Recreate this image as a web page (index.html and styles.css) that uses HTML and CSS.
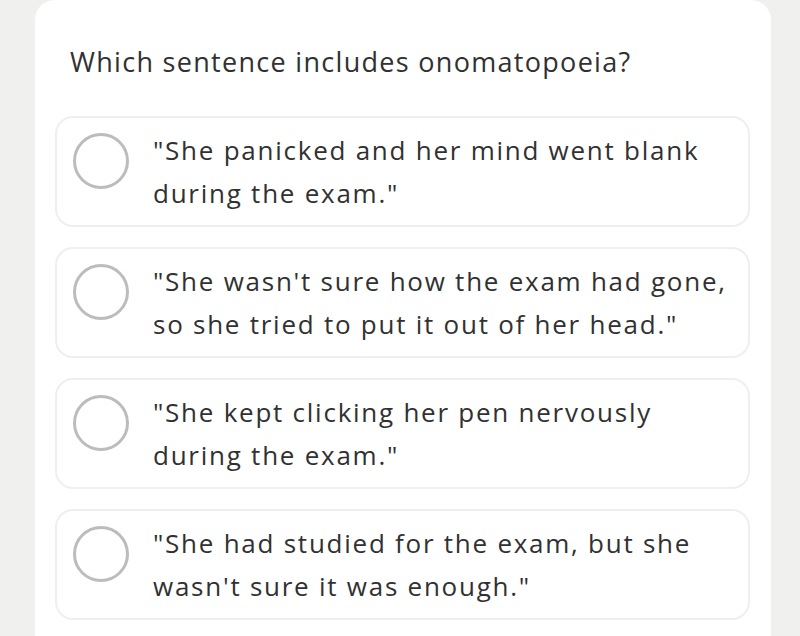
FILE: index.html
```html
<!DOCTYPE html>
<html lang="en">
<head>
<meta charset="utf-8">
<title>Quiz</title>
<link rel="stylesheet" href="styles.css">
</head>
<body>
<div class="card">
  <h1 class="question">Which sentence includes onomatopoeia?</h1>
  <div class="options">
    <div class="option">
      <span class="radio"></span>
      <p class="text">"She panicked and her mind went blank during the exam."</p>
    </div>
    <div class="option">
      <span class="radio"></span>
      <p class="text">"She wasn't sure how the exam had gone, so she tried to put it out of her head."</p>
    </div>
    <div class="option">
      <span class="radio"></span>
      <p class="text">"She kept clicking her pen nervously during the exam."</p>
    </div>
    <div class="option">
      <span class="radio"></span>
      <p class="text">"She had studied for the exam, but she wasn't sure it was enough."</p>
    </div>
  </div>
</div>
</body>
</html>
```

FILE: styles.css
```css
html, body {
  margin: 0;
  padding: 0;
  background: #f0f0ee;
  height: 100%;
  overflow: hidden;
}
body {
  font-family: "Open Sans", "Noto Sans", sans-serif;
  color: #313131;
}
.card {
  margin-left: 35px;
  width: 736px;
  height: 700px;
  background: #ffffff;
  border-radius: 20px 20px 0 0;
  padding: 42px 21px 0 20px;
  box-sizing: border-box;
}
.question {
  margin: 0 0 34px 15px;
  font-size: 27px;
  font-weight: 400;
  line-height: 40px;
  letter-spacing: 1.3px;
  color: #313131;
}
.options {
  display: flex;
  flex-direction: column;
  gap: 20px;
}
.option {
  display: flex;
  align-items: flex-start;
  border: 2px solid #efefef;
  border-radius: 18px;
  padding: 11px 16px 6px 16px;
  height: 111px;
  box-sizing: border-box;
}
.radio {
  flex: none;
  width: 56px;
  height: 56px;
  box-sizing: border-box;
  border: 3.5px solid #bcbcc0;
  border-radius: 50%;
  margin-top: 4px;
}
.text {
  margin: 0 0 0 24px;
  font-size: 26px;
  line-height: 43px;
  letter-spacing: 1.75px;
  width: 580px;
}
```
